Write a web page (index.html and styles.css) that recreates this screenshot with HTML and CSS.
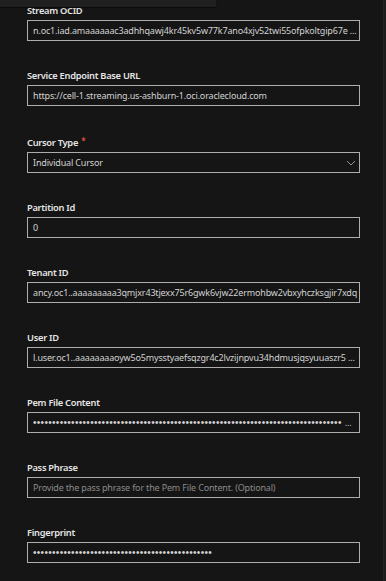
FILE: index.html
```html
<!DOCTYPE html>
<html lang="en">
<head>
<meta charset="utf-8">
<title>Stream connection</title>
<link rel="stylesheet" href="styles.css">
</head>
<body>
<div class="topband"></div>
<div class="scrolltrack"></div>
<main class="form">
  <div class="field">
    <div class="label">Stream OCID</div>
    <div class="input">n.oc1.iad.amaaaaaac3adhhqawj4kr45kv5w77k7ano4xjv52twi55ofpkoltgip67e ...</div>
  </div>
  <div class="field">
    <div class="label">Service Endpoint Base URL</div>
    <div class="input">https://cell-1.streaming.us-ashburn-1.oci.oraclecloud.com</div>
  </div>
  <div class="field">
    <div class="label">Cursor Type <span class="req">*</span></div>
    <div class="input select">
      <span>Individual Cursor</span>
      <svg class="chev" width="10" height="6" viewBox="0 0 10 6"><path d="M1 1 L5 5 L9 1" fill="none" stroke="#8f8f8f" stroke-width="1"/></svg>
    </div>
  </div>
  <div class="field">
    <div class="label">Partition Id</div>
    <div class="input">0</div>
  </div>
  <div class="field">
    <div class="label">Tenant ID</div>
    <div class="input">ancy.oc1..aaaaaaaaa3qmjxr43tjexx75r6gwk6vjw22ermohbw2vbxyhczksgjir7xdq</div>
  </div>
  <div class="field">
    <div class="label">User ID</div>
    <div class="input">l.user.oc1..aaaaaaaaoyw5o5mysstyaefsqzgr4c2lvzijnpvu34hdmusjqsyuuaszr5 ...</div>
  </div>
  <div class="field">
    <div class="label">Pem File Content</div>
    <div class="input secret"><span class="dots">•••••••••••••••••••••••••••••••••••••••••••••••••••••••••••••••••••••••••••••••••</span><span class="ell">...</span></div>
  </div>
  <div class="field">
    <div class="label">Pass Phrase</div>
    <div class="input placeholder">Provide the pass phrase for the Pem File Content. (Optional)</div>
  </div>
  <div class="field">
    <div class="label">Fingerprint</div>
    <div class="input secret"><span class="dots">•••••••••••••••••••••••••••••••••••••••••••••••</span></div>
  </div>
</main>
</body>
</html>
```
FILE: styles.css
```css
html, body {
  margin: 0;
  padding: 0;
  background: #151515;
  font-family: "Noto Sans", "Open Sans", sans-serif;
}
body {
  position: relative;
  height: 581px;
  overflow: hidden;
}
.topband {
  position: absolute;
  left: 0;
  top: 0;
  width: 216px;
  height: 7px;
  background: #202020;
  box-shadow: 0 1px 1px rgba(0,0,0,0.5);
}
.scrolltrack {
  position: absolute;
  right: 0;
  top: 0;
  width: 2px;
  height: 100%;
  background: #1c1c1c;
  border-left: 1px solid #252525;
}
.form {
  padding: 4px 0 0 27px;
  width: 333px;
  display: flex;
  flex-direction: column;
}
.field {
  display: flex;
  flex-direction: column;
  gap: 2px;
  margin-bottom: 28px;
}
.label {
  font-size: 9.3px;
  letter-spacing: -0.28px;
  line-height: 14px;
  font-weight: 600;
  color: #e4e4e4;
  white-space: nowrap;
}
.req {
  color: #e5534b;
  font-size: 8px;
  margin-left: 1px;
  vertical-align: 2px;
}
.input {
  box-sizing: border-box;
  height: 21px;
  border: 1px solid #adadad;
  padding: 0 5px;
  font-size: 9px;
  letter-spacing: -0.17px;
  line-height: 19px;
  color: #d2d2d2;
  white-space: nowrap;
  overflow: hidden;
}
.select {
  display: flex;
  justify-content: space-between;
  align-items: center;
  padding-right: 3px;
}
.chev {
  display: block;
}
.placeholder {
  color: #8a8a8a;
}
.secret {
  display: flex;
  align-items: center;
}
.dots {
  flex: none;
  font-family: "Liberation Sans", sans-serif;
  font-size: 10px;
  letter-spacing: 0.31px;
}
.ell {
  margin-left: 3px;
  color: #bdbdbd;
  font-size: 9px;
}
```
